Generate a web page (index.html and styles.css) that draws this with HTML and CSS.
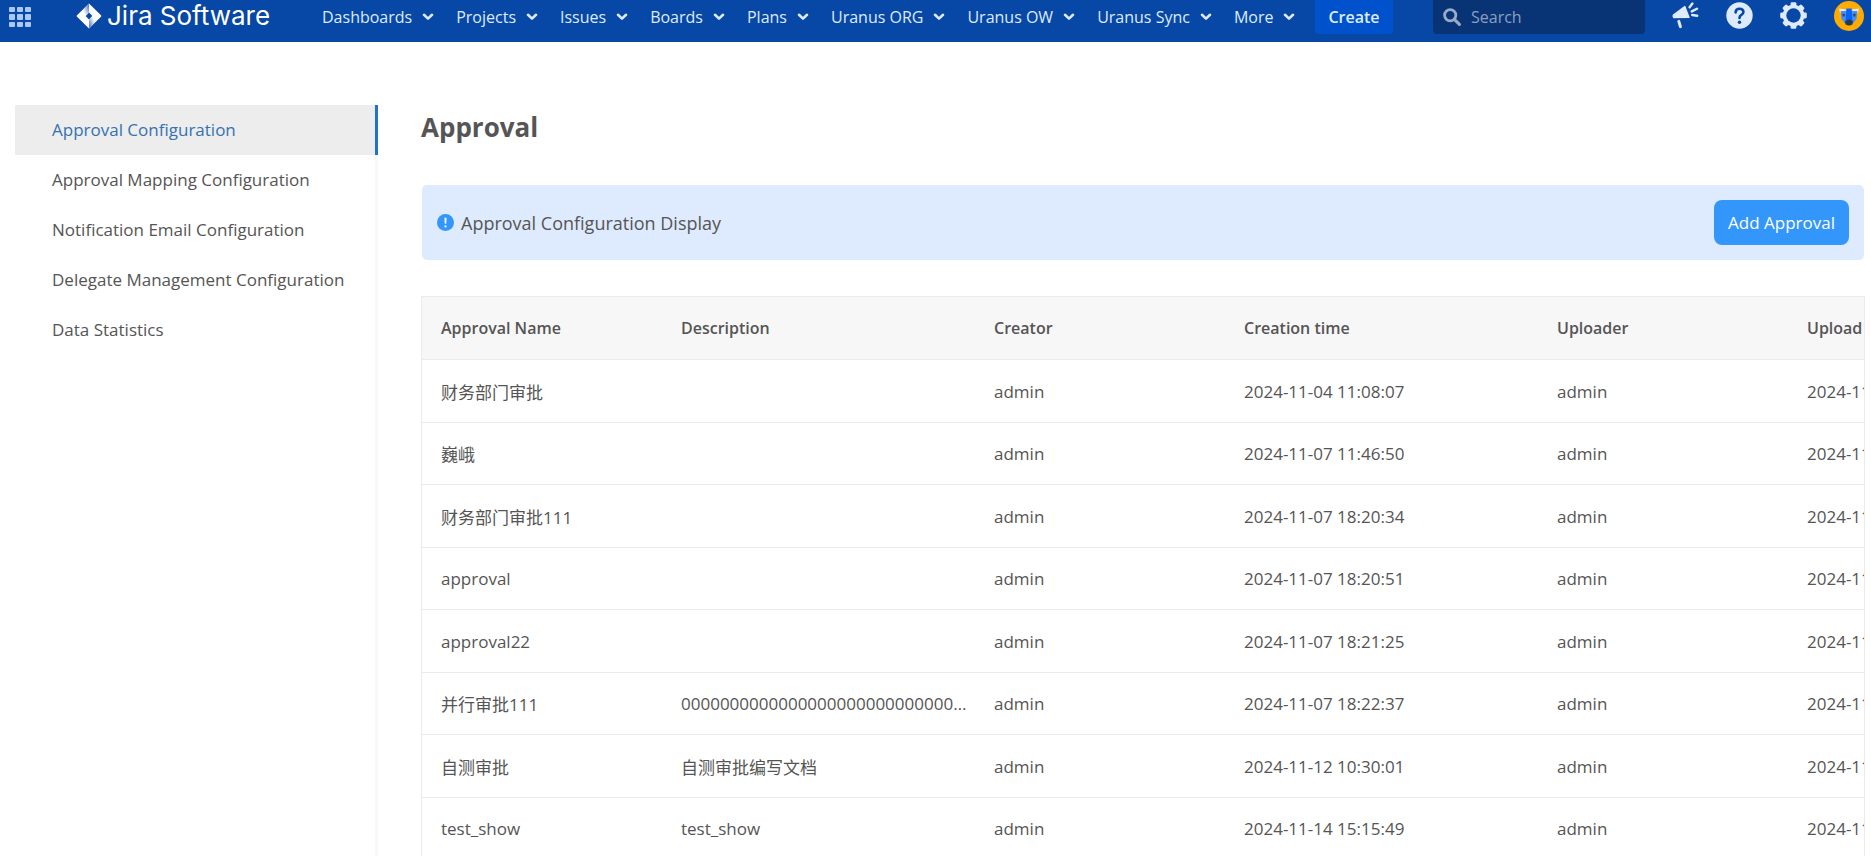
FILE: index.html
```html
<!DOCTYPE html>
<html lang="en">
<head>
    <meta charset="UTF-8">
    <meta name="viewport" content="width=device-width, initial-scale=1.0">
    <title>Approval - Jira Software</title>
    <link rel="stylesheet" href="styles.css">
</head>
<body>
    <svg class="sprite" aria-hidden="true">
        <symbol id="chevron" viewBox="0 0 12 8">
            <path d="M2 1.8 L6 5.6 L10 1.8" fill="none" stroke="currentColor" stroke-width="2.6" stroke-linecap="round" stroke-linejoin="round"/>
        </symbol>
    </svg>

    <header class="topbar">
        <button class="apps" aria-label="Applications">
            <svg width="22" height="20" viewBox="0 0 22 20" fill="#a9c8f8">
                <rect x="0" y="0" width="6" height="5" rx="1"/><rect x="8" y="0" width="6" height="5" rx="1"/><rect x="16" y="0" width="6" height="5" rx="1"/>
                <rect x="0" y="7" width="6" height="6" rx="1"/><rect x="8" y="7" width="6" height="6" rx="1"/><rect x="16" y="7" width="6" height="6" rx="1"/>
                <rect x="0" y="15" width="6" height="5" rx="1"/><rect x="8" y="15" width="6" height="5" rx="1"/><rect x="16" y="15" width="6" height="5" rx="1"/>
            </svg>
        </button>

        <a class="logo" href="#">
            <svg width="26" height="26" viewBox="0 0 26 26">
                <defs>
                    <linearGradient id="fold1" x1="0.9" y1="0.2" x2="0.3" y2="0.7">
                        <stop offset="0" stop-color="#5f87cc"/>
                        <stop offset="1" stop-color="#fff"/>
                    </linearGradient>
                    <linearGradient id="fold2" x1="0.1" y1="0.8" x2="0.7" y2="0.3">
                        <stop offset="0" stop-color="#5f87cc"/>
                        <stop offset="1" stop-color="#fff"/>
                    </linearGradient>
                </defs>
                <path fill="#fff" fill-rule="evenodd" d="M13 0.6 L25 12.2 Q25.8 13 25 13.8 L13 25.4 L1 13.8 Q0.2 13 1 12.2 Z M13 9.6 L9.6 13 L13 16.4 L16.4 13 Z"/>
                <path fill="url(#fold1)" d="M13 0.6 V9.6 L9.6 13 L5.6 8.4 Z"/>
                <path fill="url(#fold2)" d="M13 25.4 V16.4 L16.4 13 L20.4 17.6 Z"/>
            </svg>
            <span>Jira Software</span>
        </a>

        <nav class="menu">
            <a href="#">Dashboards <svg><use href="#chevron"/></svg></a>
            <a href="#">Projects <svg><use href="#chevron"/></svg></a>
            <a href="#">Issues <svg><use href="#chevron"/></svg></a>
            <a href="#">Boards <svg><use href="#chevron"/></svg></a>
            <a href="#">Plans <svg><use href="#chevron"/></svg></a>
            <a href="#">Uranus ORG <svg><use href="#chevron"/></svg></a>
            <a href="#">Uranus OW <svg><use href="#chevron"/></svg></a>
            <a href="#">Uranus Sync <svg><use href="#chevron"/></svg></a>
            <a href="#">More <svg><use href="#chevron"/></svg></a>
        </nav>

        <button class="create">Create</button>

        <div class="tools">
            <label class="search">
                <svg width="18" height="18" viewBox="0 0 18 18" fill="none" stroke="currentColor" stroke-linecap="round">
                    <circle cx="7.2" cy="7.2" r="5.6" stroke-width="2.8"/>
                    <path d="M11.6 11.6 L16.4 16.4" stroke-width="3"/>
                </svg>
                <input type="text" placeholder="Search" aria-label="Search">
            </label>
            <button class="icon" aria-label="Feedback">
                <svg width="27" height="27" viewBox="0 0 27 27" fill="#deebff" stroke="#deebff" stroke-linecap="round" stroke-linejoin="round">
                    <path d="M12.8 4.6 L17 15.4 L1.8 15.6 Q0.8 14.4 1.4 13 Z" stroke-width="1.4"/>
                    <path d="M6.8 19.4 L8.4 24.6" stroke-width="3" fill="none"/>
                    <path d="M17.6 5.2 L20.4 1.6 M19.8 9.4 L25 6.8 M20.2 13 L25.2 13.8" stroke-width="2.4" fill="none"/>
                </svg>
            </button>
            <button class="icon" aria-label="Help">
                <svg width="27" height="27" viewBox="0 0 27 27">
                    <circle cx="13.5" cy="13.5" r="13.2" fill="#deebff"/>
                    <path d="M9.6 10.4 Q9.8 6.8 13.4 6.8 Q17.4 6.8 17.4 10 Q17.4 11.8 15.4 12.9 Q13.5 13.9 13.5 16" fill="none" stroke="#0747a6" stroke-width="2.6" stroke-linecap="round"/>
                    <circle cx="13.5" cy="20.2" r="1.7" fill="#0747a6"/>
                </svg>
            </button>
            <button class="icon" aria-label="Settings">
                <svg width="27" height="27" viewBox="0 0 27 27">
                    <g fill="#deebff">
                        <rect id="tooth" x="10.6" y="0.2" width="5.8" height="26.6" rx="1.4"/>
                        <use href="#tooth" transform="rotate(45 13.5 13.5)"/>
                        <use href="#tooth" transform="rotate(90 13.5 13.5)"/>
                        <use href="#tooth" transform="rotate(135 13.5 13.5)"/>
                        <circle cx="13.5" cy="13.5" r="10.8"/>
                    </g>
                    <circle cx="13.5" cy="13.5" r="7.2" fill="#0747a6"/>
                </svg>
            </button>
            <button class="icon" aria-label="User profile">
                <svg width="30" height="30" viewBox="0 0 30 30">
                    <circle cx="15" cy="15" r="15" fill="#ffab00"/>
                    <path d="M5 7.6 L12 8.4 L11 12 H6 Z M25 7.6 L18 8.4 L19 12 H24 Z" fill="#deebff"/>
                    <path d="M6.6 10 L23.4 10 L22.6 18 L19 22.6 H11 L7.4 18 Z" fill="#4c8df0"/>
                    <path d="M12.4 7.4 H17.6 L18.4 19 H11.6 Z" fill="#0065ff"/>
                    <path d="M8.4 12.4 L11 13 L10.6 15.4 H8.6 Z M21.6 12.4 L19 13 L19.4 15.4 H21.4 Z" fill="#344563"/>
                    <path d="M11 20 Q15 16.8 19 20 L18.4 23.4 Q15 25.4 11.6 23.4 Z" fill="#253858"/>
                </svg>
            </button>
        </div>
    </header>

    <div class="layout">
        <aside class="sidebar">
            <a class="active" href="#">Approval Configuration</a>
            <a href="#">Approval Mapping Configuration</a>
            <a href="#">Notification Email Configuration</a>
            <a href="#">Delegate Management Configuration</a>
            <a href="#">Data Statistics</a>
        </aside>

        <main>
            <h1>Approval</h1>

            <div class="banner">
                <svg width="17" height="17" viewBox="0 0 17 17">
                    <circle cx="8.5" cy="8.5" r="8.5" fill="#3396fb"/>
                    <path d="M7.4 3.8 H9.6 L9.2 9.8 H7.8 Z" fill="#fff"/>
                    <circle cx="8.5" cy="12.4" r="1.1" fill="#fff"/>
                </svg>
                <span>Approval Configuration Display</span>
                <button class="add">Add Approval</button>
            </div>

            <div class="table-wrap">
                <table>
                    <colgroup>
                        <col class="col-name">
                        <col class="col-long">
                        <col class="col-user">
                        <col class="col-long">
                        <col class="col-user">
                        <col class="col-long">
                    </colgroup>
                    <thead>
                        <tr><th>Approval Name</th><th>Description</th><th>Creator</th><th>Creation time</th><th>Uploader</th><th>Upload time</th></tr>
                    </thead>
                    <tbody>
                        <tr><td>财务部门审批</td><td></td><td>admin</td><td>2024-11-04 11:08:07</td><td>admin</td><td>2024-11-04 11:08:07</td></tr>
                        <tr><td>巍峨</td><td></td><td>admin</td><td>2024-11-07 11:46:50</td><td>admin</td><td>2024-11-07 11:46:50</td></tr>
                        <tr><td>财务部门审批111</td><td></td><td>admin</td><td>2024-11-07 18:20:34</td><td>admin</td><td>2024-11-07 18:20:34</td></tr>
                        <tr><td>approval</td><td></td><td>admin</td><td>2024-11-07 18:20:51</td><td>admin</td><td>2024-11-07 18:20:51</td></tr>
                        <tr><td>approval22</td><td></td><td>admin</td><td>2024-11-07 18:21:25</td><td>admin</td><td>2024-11-07 18:21:25</td></tr>
                        <tr><td>并行审批111</td><td>000000000000000000000000000000</td><td>admin</td><td>2024-11-07 18:22:37</td><td>admin</td><td>2024-11-07 18:22:37</td></tr>
                        <tr><td>自测审批</td><td>自测审批编写文档</td><td>admin</td><td>2024-11-12 10:30:01</td><td>admin</td><td>2024-11-12 10:30:01</td></tr>
                        <tr><td>test_show</td><td>test_show</td><td>admin</td><td>2024-11-14 15:15:49</td><td>admin</td><td>2024-11-14 15:15:49</td></tr>
                    </tbody>
                </table>
            </div>
        </main>
    </div>
</body>
</html>
```

FILE: styles.css
```css
* {
    box-sizing: border-box;
}

body {
    margin: 0;
    height: 100vh;
    display: flex;
    flex-direction: column;
    overflow: hidden;
    font-family: "Open Sans", "Noto Sans CJK SC", sans-serif;
    font-size: 17px;
    color: #555;
    background-color: #fff;
}

a {
    color: inherit;
    text-decoration: none;
}

button {
    padding: 0;
    border: none;
    background: none;
    font-family: inherit;
    font-size: 17px;
    cursor: pointer;
}

svg {
    display: block;
    flex: none;
}

.sprite {
    position: absolute;
    width: 0;
    height: 0;
}

/* top bar */
.topbar {
    display: flex;
    align-items: center;
    flex: none;
    height: 42px;
    padding: 0 7px 8px 9px;
    background-color: #0747a6;
    color: #deebff;
    font-size: 16px;
}

.apps {
    margin-right: 45px;
}

.logo {
    display: flex;
    align-items: center;
    gap: 5px;
    width: 246px;
    padding-bottom: 3px;
    font-family: Inter, sans-serif;
    font-size: 26px;
    line-height: 30px;
    color: #fff;
    white-space: nowrap;
}

.menu {
    display: flex;
    gap: 22px;
    white-space: nowrap;
}

.menu a {
    display: flex;
    align-items: center;
    gap: 10px;
}

.menu svg {
    width: 12px;
    height: 8px;
}

.create {
    height: 34px;
    padding: 0 13px;
    margin-left: 20px;
    border-radius: 0 0 4px 4px;
    background-color: #0052cc;
    color: #deebff;
    font-size: 16px;
    font-weight: 600;
}

.tools {
    display: flex;
    align-items: center;
    gap: 27px;
    margin-left: auto;
}

.search {
    display: flex;
    align-items: center;
    gap: 10px;
    width: 212px;
    height: 34px;
    padding: 0 10px;
    border-radius: 0 0 4px 4px;
    background-color: #083475;
    color: #9aabc8;
}

.search input {
    width: 100%;
    padding: 0;
    border: none;
    outline: none;
    background: none;
    font-family: inherit;
    font-size: 16px;
    color: #deebff;
}

.search input::placeholder {
    color: #8c9fc2;
    opacity: 1;
}

.icon {
    padding-bottom: 3px;
}

/* page */
.layout {
    display: flex;
    flex: 1;
    min-height: 0;
    padding: 63px 6px 0 15px;
}

.sidebar {
    flex: none;
    width: 363px;
    border-right: 3px solid #f8f8f8;
}

.sidebar a {
    display: block;
    margin-right: -3px;
    padding-left: 37px;
    line-height: 50px;
}

.sidebar .active {
    border-right: 3px solid #2273c3;
    background-color: #ededed;
    color: #3572b0;
}

main {
    flex: 1;
    min-width: 0;
    padding-left: 43px;
}

h1 {
    margin: 0 0 36px;
    font-size: 26px;
    line-height: 44px;
}

.banner {
    display: flex;
    align-items: center;
    gap: 7px;
    height: 75px;
    margin: 0 1px 36px;
    padding: 0 15px;
    border-radius: 5px;
    background-color: #deeafd;
    font-size: 18px;
}

.add {
    height: 45px;
    margin-left: auto;
    padding: 0 14px;
    border-radius: 8px;
    background-color: #3396fb;
    color: #fff;
}

.table-wrap {
    overflow: hidden;
    border: 1px solid #ebebeb;
}

table {
    width: 1679px;
    table-layout: fixed;
    border-collapse: separate;
    border-spacing: 0;
}

.col-name {
    width: 240px;
}

.col-user {
    width: 250px;
}

.col-long {
    width: 313px;
}

th,
td {
    height: 63px;
    padding: 0 4px 0 19px;
    border-bottom: 1px solid #ebebeb;
    text-align: left;
    white-space: nowrap;
    overflow: hidden;
    text-overflow: ellipsis;
}

th {
    background-color: #f7f7f7;
    font-size: 16px;
    font-weight: 600;
}

tbody tr:nth-child(even) td {
    height: 62px;
}
```
